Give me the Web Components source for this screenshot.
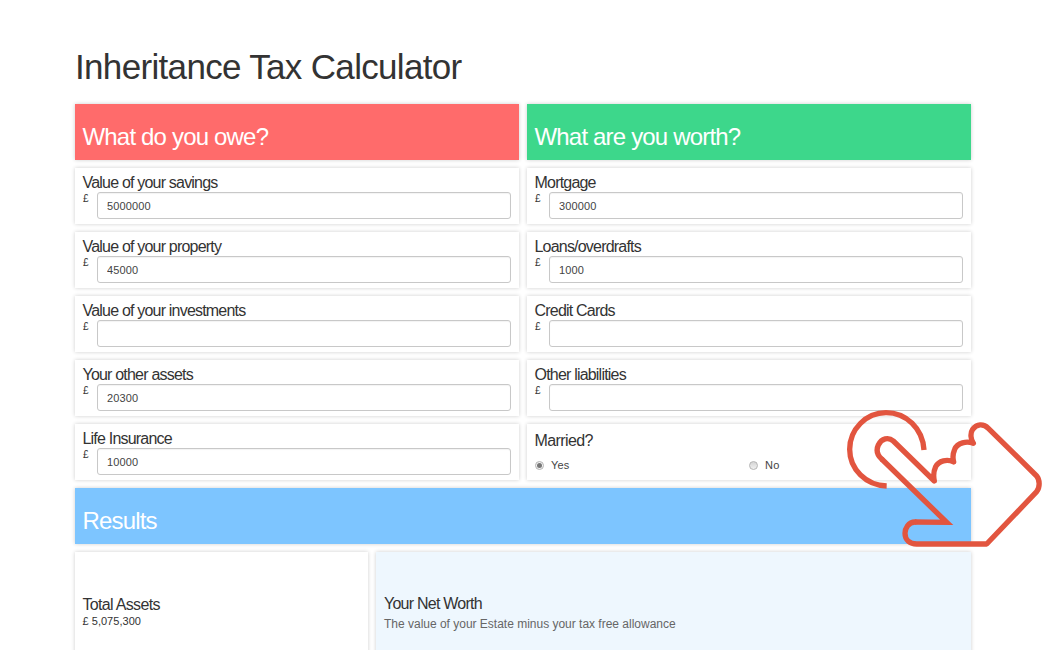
<!DOCTYPE html>
<html lang="en"><head><meta charset="utf-8"><title>Inheritance Tax Calculator</title>
<style>
html,body{margin:0;height:650px;overflow:hidden;background:#fff}
body{font-family:"Liberation Sans",Arial,sans-serif;color:#333;position:relative}
</style></head><body>
<tax-page>
  <tax-banner slot="left-head" color="#ff6b6b">What do you owe?</tax-banner>
  <tax-banner slot="right-head" color="#3dd78b">What are you worth?</tax-banner>
  <tax-field slot="left" label="Value of your savings" value="5000000"></tax-field>
  <tax-field slot="left" label="Value of your property" value="45000"></tax-field>
  <tax-field slot="left" label="Value of your investments"></tax-field>
  <tax-field slot="left" label="Your other assets" value="20300"></tax-field>
  <tax-field slot="left" label="Life Insurance" value="10000"></tax-field>
  <tax-field slot="right" label="Mortgage" value="300000"></tax-field>
  <tax-field slot="right" label="Loans/overdrafts" value="1000"></tax-field>
  <tax-field slot="right" label="Credit Cards"></tax-field>
  <tax-field slot="right" label="Other liabilities"></tax-field>
  <tax-married slot="right"></tax-married>
  <tax-banner slot="results-head" color="#7dc5ff">Results</tax-banner>
  <tax-result slot="total" title-text="Total Assets" detail="£ 5,075,300" kind="amount"></tax-result>
  <tax-result slot="net" title-text="Your Net Worth" detail="The value of your Estate minus your tax free allowance" kind="note"></tax-result>
</tax-page>
<tap-icon></tap-icon>
<script>
const shadow=(el,html)=>el.attachShadow({mode:'open'}).innerHTML=html;
const esc=s=>(s||'').replace(/&/g,'&amp;').replace(/"/g,'&quot;').replace(/</g,'&lt;');
const cardCss='box-sizing:border-box;display:block;background:#fff;box-shadow:0 0 4px rgba(0,0,0,.2);';
customElements.define('tax-page',class extends HTMLElement{connectedCallback(){if(this.shadowRoot)return;shadow(this,`<style>
:host{display:block;width:896px;margin-left:75px;padding-top:47px}
h1{margin:0 0 18px;font:400 35px/39px "Liberation Sans",Arial,sans-serif;color:#333;letter-spacing:-.67px}
.grid{display:grid;grid-template-columns:1fr 1fr;gap:8px}
.col{display:grid;gap:8px;grid-auto-rows:56px}
.full{grid-column:1/-1}
.bottom{grid-column:1/-1;display:grid;grid-template-columns:293px 1fr;gap:8px;height:160px}
</style>
<h1>Inheritance Tax Calculator</h1>
<div class="grid">
<div class="col"><slot name="left-head"></slot><slot name="left"></slot></div>
<div class="col"><slot name="right-head"></slot><slot name="right"></slot></div>
<div class="full"><slot name="results-head"></slot></div>
<div class="bottom"><slot name="total"></slot><slot name="net"></slot></div>
</div>`)}});
customElements.define('tax-banner',class extends HTMLElement{connectedCallback(){if(this.shadowRoot)return;shadow(this,`<style>
:host{${cardCss}height:56px;padding:20px 7.5px 0;color:#fff;background:${this.getAttribute('color')};font-size:24px;line-height:26px;letter-spacing:-.82px}
</style><slot></slot>`)}});
customElements.define('tax-field',class extends HTMLElement{connectedCallback(){if(this.shadowRoot)return;shadow(this,`<style>
:host{${cardCss}height:56px;padding:6px 8px 0;position:relative}
.l{font-size:16px;line-height:18px;letter-spacing:-.8px;color:#333;margin-left:-.5px}
.row{display:flex;gap:8px;align-items:flex-start}
.c{font-size:10px;line-height:12px;width:6px;margin-top:1px;color:#333}
input{box-sizing:border-box;flex:1;min-width:0;height:27px;margin:0;padding:1px 9px 0;border:1px solid #c8c8c8;border-radius:3px;background:#fff;font:11px "Liberation Sans",Arial,sans-serif;letter-spacing:.15px;color:#444;outline:0;box-shadow:inset 0 1px 1px rgba(0,0,0,.05)}
</style><div class="l">${esc(this.getAttribute('label'))}</div><div class="row"><span class="c">£</span><input type="text" value="${esc(this.getAttribute('value'))}"></div>`)}});
customElements.define('tax-married',class extends HTMLElement{connectedCallback(){if(this.shadowRoot)return;shadow(this,`<style>
:host{${cardCss}height:56px;padding:8px 8px 0}
.l{font-size:16px;line-height:18px;letter-spacing:-.6px;color:#333;margin-left:-.5px}
.opts{display:grid;grid-template-columns:1fr 1fr;margin-top:8px}
.o{display:flex;align-items:center;gap:6px;font-size:11px;line-height:14px;color:#444;letter-spacing:.2px}
.o span{margin-left:1px}
i{box-sizing:border-box;width:9px;height:9px;border-radius:50%;border:1px solid #b4b4b4;background:linear-gradient(#d4d4d4,#f0f0f0);display:grid;place-items:center}
i.on{background:#f4f4f4}
i.on::after{content:"";width:5px;height:5px;border-radius:50%;background:#777}
</style><div class="l">Married?</div><div class="opts"><label class="o"><i class="on"></i><span>Yes</span></label><label class="o"><i></i><span>No</span></label></div>`)}});
customElements.define('tax-result',class extends HTMLElement{connectedCallback(){if(this.shadowRoot)return;const note=this.getAttribute('kind')==='note';shadow(this,`<style>
:host{${cardCss}height:160px;padding:${note?43:44}px 8px 0 ${note?8:7.5}px;background:${note?'#eef7fe':'#fff'}}
.t{font-size:16px;line-height:18px;letter-spacing:${note?'-.76px':'-.68px'};color:#333}
.d{margin-top:${note?4:1}px;font-size:${note?12:11}px;line-height:${note?14:13}px;letter-spacing:${note?'-.01px':'.03px'};color:${note?'#666':'#333'}}
</style><div class="t">${esc(this.getAttribute('title-text'))}</div><div class="d">${esc(this.getAttribute('detail'))}</div>`)}});
customElements.define('tap-icon',class extends HTMLElement{connectedCallback(){if(this.shadowRoot)return;shadow(this,`<style>
:host{position:absolute;left:840px;top:400px;width:210px;height:160px;display:block;pointer-events:none}
svg{display:block}
</style><svg width="210" height="160" viewBox="0 0 630 480" fill="none" stroke="#e2553f" stroke-width="16">
<path d="M252 150C248 85 198 38 138 38C78 38 29 88 29 148C29 208 78 256 140 258"/>
<path stroke-linejoin="miter" stroke-miterlimit="5" d="M125 177L320 367L225 366"/>
<path stroke-linejoin="round" stroke-linecap="round" d="M225 366C205 366 195 385 195 400C195 420 210 432 230 432L440 432L590 275C600 262 600 240 590 228L445 85C430 70 410 72 398 88C390 100 392 118 400 130C380 122 352 128 344 148C338 162 338 175 341 186C322 176 296 182 287 200C281 213 280 230 283 243L160 123C145 110 125 115 115 135C108 150 112 165 125 177"/>
</svg>`)}});
</script>
</body></html>
